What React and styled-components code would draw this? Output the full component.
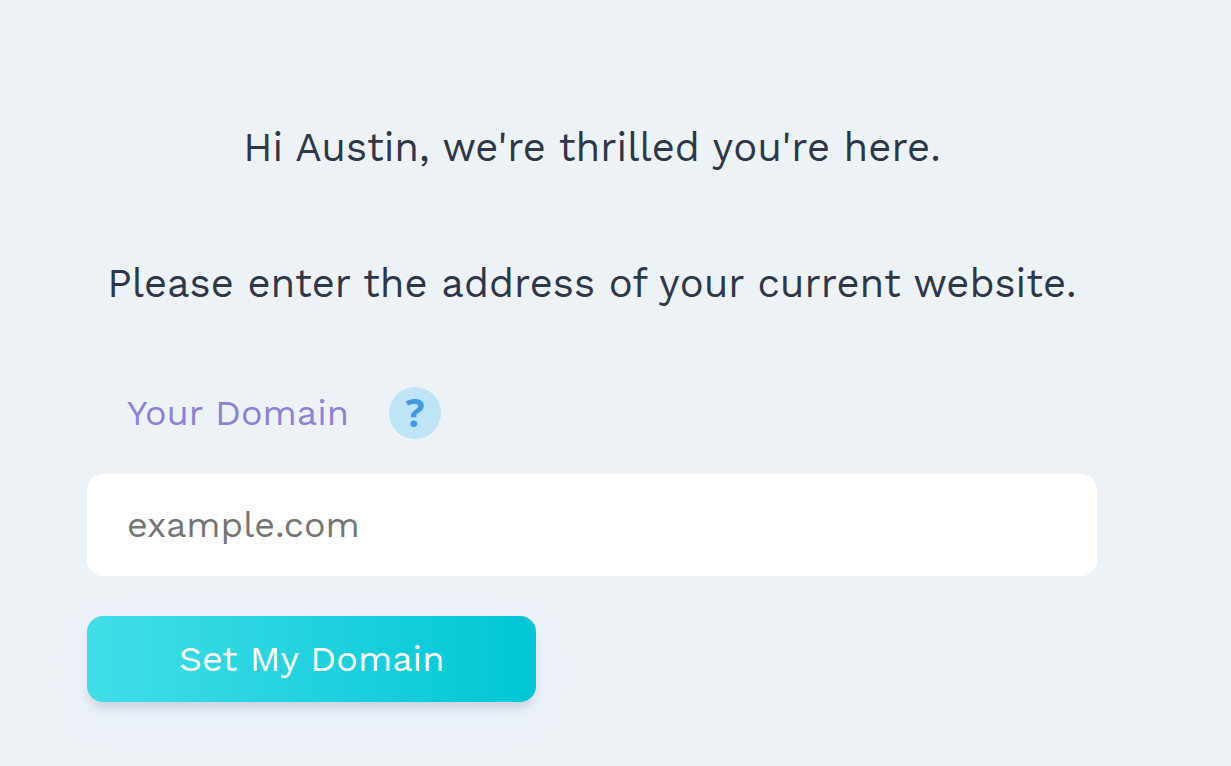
import React, { useState } from 'react';
import styled, { createGlobalStyle, ThemeProvider } from 'styled-components';

const theme = {
	colorBG: '#edf2f7',
	colorText: '#2d3748',
	colorLabel: '#8c80db',
	colorPlaceholder: '#757575',
	colorHelpBG: '#bde4f7',
	colorHelp: '#4299e1',
	gradientStart: '#42dee8',
	gradientEnd: '#00c6d5',
	fontFamily: "'Work Sans', Inter, 'Liberation Sans', sans-serif",
}

const GlobalStyle = createGlobalStyle`
	*, *::before, *::after {
		box-sizing: border-box;
	}

	body {
		margin: 0;
		background-color: ${props => props.theme.colorBG};
		color: ${props => props.theme.colorText};
		font-family: ${props => props.theme.fontFamily};
	}
`

const PageWrapper = styled.main`
	padding: 115px 134px 64px 87px;
`

const Heading = styled.h1`
	margin: 0 0 70px;
	font-size: 40px;
	font-weight: 400;
	line-height: 66px;
	text-align: center;
`

const DomainForm = styled.form`
	display: flex;
	flex-direction: column;
	align-items: flex-start;
`

const LabelRow = styled.div`
	display: flex;
	align-items: center;
	gap: 40px;
	padding-left: 40px;
	margin-bottom: 35px;
`

const DomainLabel = styled.label`
	color: ${props => props.theme.colorLabel};
	font-size: 36px;
	line-height: 52px;
`

const HelpButton = styled.button`
	display: flex;
	align-items: center;
	justify-content: center;
	width: 52px;
	height: 52px;
	padding: 0 0 2px;
	border: 0;
	border-radius: 50%;
	background-color: ${props => props.theme.colorHelpBG};
	color: ${props => props.theme.colorHelp};
	font-family: 'Open Sans', 'Noto Sans', sans-serif;
	font-size: 40px;
	font-weight: 700;
	line-height: 48px;
	cursor: pointer;
`

const DomainInput = styled.input`
	width: 100%;
	margin-bottom: 40px;
	padding: 25px 40px;
	border: 0;
	border-radius: 16px;
	background-color: #fff;
	color: ${props => props.theme.colorText};
	font-family: inherit;
	font-size: 36px;
	line-height: 52px;

	&::placeholder {
		color: ${props => props.theme.colorPlaceholder};
		opacity: 1;
	}
`

const SubmitButton = styled.button`
	padding: 17px 92px;
	border: 0;
	border-radius: 16px;
	background-image: linear-gradient(90deg, ${props => props.theme.gradientStart}, ${props => props.theme.gradientEnd});
	box-shadow: 0 8px 10px -2px rgba(50, 50, 80, 0.14), 0 14px 36px rgba(230, 238, 252, 0.9);
	color: #fff;
	font-family: inherit;
	font-size: 36px;
	line-height: 52px;
	cursor: pointer;
`

const App = () => {
	const [domain, setDomain] = useState('');

	return (
		<ThemeProvider theme={theme}>
			<GlobalStyle />
			<PageWrapper>
				<Heading>Hi Austin, we're thrilled you're here.</Heading>
				<Heading as="h2">Please enter the address of your current website.</Heading>
				<DomainForm onSubmit={e => e.preventDefault()}>
					<LabelRow>
						<DomainLabel htmlFor="domain">Your Domain</DomainLabel>
						<HelpButton type="button">?</HelpButton>
					</LabelRow>
					<DomainInput
						id="domain"
						type="text"
						placeholder="example.com"
						value={domain}
						onChange={e => setDomain(e.target.value)}
					/>
					<SubmitButton type="submit">Set My Domain</SubmitButton>
				</DomainForm>
			</PageWrapper>
		</ThemeProvider>
	)
}

export default App;
